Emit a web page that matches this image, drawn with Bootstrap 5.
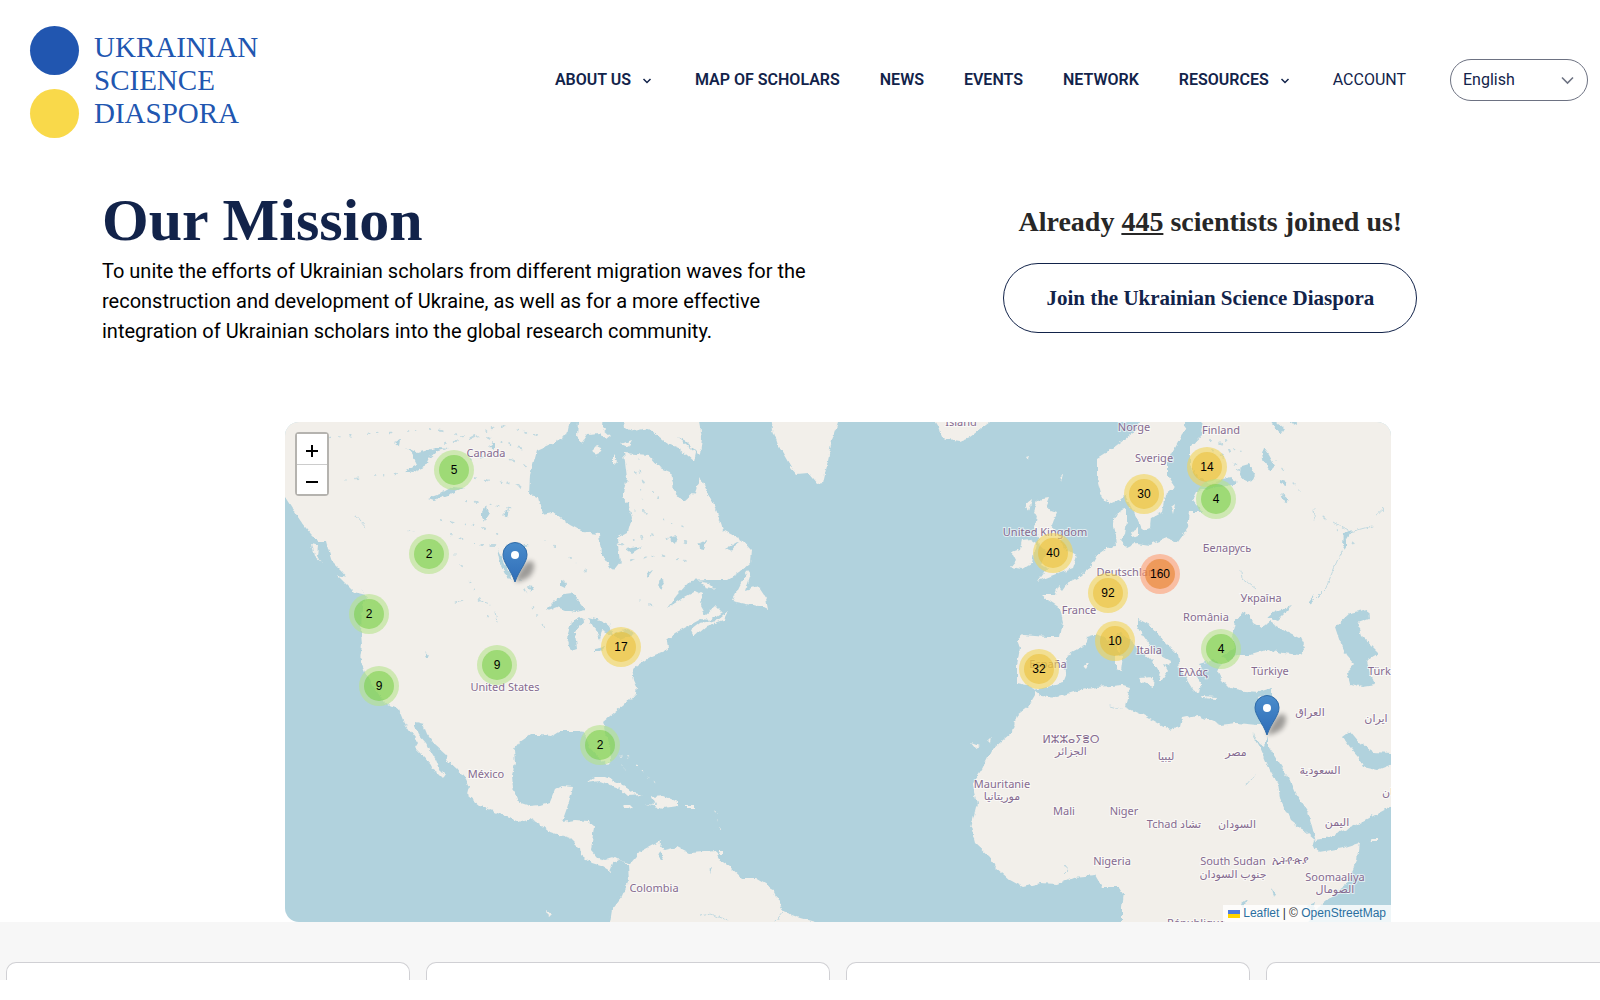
<!DOCTYPE html>
<html lang="en">
<head>
<meta charset="utf-8">
<meta name="viewport" content="width=device-width, initial-scale=1">
<title>Ukrainian Science Diaspora</title>
<link href="https://cdn.jsdelivr.net/npm/bootstrap@5.3.0/dist/css/bootstrap.min.css" rel="stylesheet">
<style>
  :root { --navy: #12234a; --blue: #2156b0; --yellow: #f9d94a; --water: #b1d2dd; --land: #f2efea; }
  body { font-family: Roboto, "Liberation Sans", sans-serif; color: #000; background: #fff; overflow-x: hidden; }
  .site-head { padding: 26px 12px 0 30px; }
  .logo-link { gap: 15px; }
  .logo-dots { display: flex; flex-direction: column; gap: 14px; }
  .logo-dots span { width: 49px; height: 49px; border-radius: 50%; background: var(--blue); }
  .logo-dots span + span { background: var(--yellow); }
  .logo-name { font: 29px/33px "Liberation Serif", serif; color: var(--blue); padding-top: 5px; }
  .site-nav { gap: 40px; padding-top: 33px; }
  .site-nav a { color: var(--navy); text-decoration: none; font-weight: 600; font-size: 16px; line-height: 24px; white-space: nowrap; }
  .site-nav a svg { margin: 0 3px 0 7px; }
  .site-nav a.account { font-weight: 400; }
  .lang { width: 138px; height: 42px; border: 1px solid #6d7282; border-radius: 21px; padding: 0 12px; font-size: 16px; color: var(--navy); background: transparent; appearance: none; }
  .lang-wrap svg { position: absolute; right: 14px; top: 17px; pointer-events: none; }
  .hero { padding: 48px 98px 0 102px; }
  .hero h1 { font: bold 60px/68px "Liberation Serif", serif; color: var(--navy); margin: 0 0 2px; }
  .hero p { font-size: 20px; line-height: 30px; max-width: 720px; margin: 0; }
  .joined { font: bold 28px/36px "Liberation Serif", serif; color: #272727; margin: 18px 0 23px; }
  .join-btn { font: bold 21px/28px "Liberation Serif", serif; color: var(--navy); border: 1px solid var(--navy); border-radius: 35px; padding: 20px 42px; }
  .map-wrap { margin: 76px 209px 0 285px; }
  .scholar-map { height: 500px; border-radius: 14px 14px 0 14px; overflow: hidden; background: var(--water); }
  .scholar-map > svg { width: 100%; height: 100%; display: block; }
  .place { font: 11px "Noto Sans", "DejaVu Sans", sans-serif; fill: #866b90; text-anchor: middle; paint-order: stroke; stroke: #fff; stroke-opacity: .6; stroke-width: 2px; }
  .place .cut { text-anchor: start; }
  .count { font: 12px "Liberation Sans", sans-serif; text-anchor: middle; fill: #000; }
  .zoomer { position: absolute; left: 10px; top: 10px; border: 2px solid rgba(0,0,0,.25); border-radius: 4px; background-clip: padding-box; }
  .zoomer button { width: 30px; height: 30px; border: 0; background: #fff; display: flex; align-items: center; justify-content: center; padding: 4px 0 0; color: #000; }
  .zoomer button + button { border-top: 1px solid #ccc; }
  .credit { position: absolute; right: 0; bottom: 0; background: rgba(255,255,255,.8); font: 12px/17px "Liberation Sans", sans-serif; padding: 0 5px; color: #333; }
  .credit a { color: #2a6fa0; text-decoration: none; }
  .news-strip { background: #f7f7f7; padding: 40px 0 0 6px; overflow: hidden; }
  .news-strip .d-flex { gap: 16px; }
  .news-card { flex: 0 0 404px; height: 18px; background: #fff; border: 1px solid #d0d0d4; border-bottom: 0; border-radius: 10px 10px 0 0; }
</style>
<script src="https://cdn.jsdelivr.net/npm/bootstrap@5.3.0/dist/js/bootstrap.bundle.min.js"></script>
</head>
<body>
<header class="site-head d-flex justify-content-between align-items-start">
  <a href="#" class="logo-link d-flex text-decoration-none">
    <div class="logo-dots"><span></span><span></span></div>
    <div class="logo-name">UKRAINIAN<br>SCIENCE<br>DIASPORA</div>
  </a>
  <nav class="site-nav d-flex align-items-center">
    <a href="#">ABOUT US <svg width="10" height="8" viewBox="0 0 10 8" fill="none" stroke="#12234a" stroke-width="1.5"><path d="M1.500 2 5 5.500 8.500 2"/></svg></a>
    <a href="#">MAP OF SCHOLARS</a>
    <a href="#">NEWS</a>
    <a href="#">EVENTS</a>
    <a href="#">NETWORK</a>
    <a href="#">RESOURCES <svg width="10" height="8" viewBox="0 0 10 8" fill="none" stroke="#12234a" stroke-width="1.5"><path d="M1.500 2 5 5.500 8.500 2"/></svg></a>
    <a href="#" class="account">ACCOUNT</a>
    <div class="lang-wrap position-relative ms-1">
      <select class="lang" aria-label="Language"><option>English</option><option>Українська</option></select>
      <svg width="13" height="9" viewBox="0 0 13 9" fill="none" stroke="#6d7282" stroke-width="1.600"><path d="M1 1.500 6.500 7 12 1.500"/></svg>
    </div>
  </nav>
</header>

<main>
  <section class="hero">
    <div class="row g-0">
      <div class="col-7">
        <h1>Our Mission</h1>
        <p>To unite the efforts of Ukrainian scholars from different migration waves for the reconstruction and development of Ukraine, as well as for a more effective integration of Ukrainian scholars into the global research community.</p>
      </div>
      <div class="col-5 text-center">
        <h2 class="joined">Already <u>445</u> scientists joined us!</h2>
        <button type="button" class="btn join-btn">Join the Ukrainian Science Diaspora</button>
      </div>
    </div>
  </section>

  <div class="map-wrap">
    <div class="scholar-map position-relative">
      <svg viewBox="285 422 1106 500" preserveAspectRatio="xMidYMid slice" role="img" aria-label="Map of scholars">
        <defs>
          <filter id="coast" filterUnits="userSpaceOnUse" x="275" y="412" width="1126" height="520">
            <feTurbulence type="fractalNoise" baseFrequency=".16" numOctaves="3" seed="4" result="n"/>
            <feDisplacementMap in="SourceGraphic" in2="n" scale="5" xChannelSelector="R" yChannelSelector="G"/>
          </filter>
          <filter id="soft" x="-50%" y="-50%" width="200%" height="200%"><feGaussianBlur stdDeviation="2.500"/></filter>
          <linearGradient id="pinfill" x1="0" y1="0" x2="0" y2="1"><stop offset="0" stop-color="#4a8ccb"/><stop offset="1" stop-color="#2f6db8"/></linearGradient>
          <g id="pin">
            <path d="M0 0C3-10 8-18 14-21 21-22 20-12 15-6Q9-1 0 0Z" fill="#000" opacity=".35" filter="url(#soft)"/>
            <path d="M0 0C-2-6-5-11-8-16-10-20-12-23-12-27.500A12 12 0 0 1 12-27.500C12-23 10-20 8-16 5-11 2-6 0 0Z" fill="url(#pinfill)" stroke="#2e6ba8" stroke-width="1"/>
            <circle cy="-27" r="4" fill="#fff"/>
          </g>
          <g id="green"><circle r="20" fill="#b5e28c" fill-opacity=".6"/><circle r="15" fill="#6ecc39" fill-opacity=".5"/></g>
          <g id="yellow"><circle r="20" fill="#f1d357" fill-opacity=".6"/><circle r="15" fill="#e9bc2b" fill-opacity=".5"/></g>
          <g id="orange"><circle r="20" fill="#fd9c73" fill-opacity=".6"/><circle r="15" fill="#e57b20" fill-opacity=".55"/></g>
        </defs>

        <g filter="url(#coast)">
        <g fill="#f2efea">
          <!-- Americas -->
          <path d="M275 410V490L285 497 292 508 302 523 310 533 318 541 326 541 328 549 332 562 342 572 352 584 363 592 368 598 362 606 361 633 362 645 360 660 366 675 385 704 399 710 403 720 409 730 415 738 418 743 415 748 424 757 430 764 431 768 437 772 443 778 445 775 440 770 436 760 430 750 426 743 419 735 415 726 415 722 423 724 427 734 435 745 446 755 448 761 457 769 466 780 469 787 467 795 480 806 500 814 519 822 530 818 540 824 548 831 560 835 570 838 580 848 581 855 592 863 602 866 610 871 613 863 620 858 628 866 629 880 622 897 612 910 608 935H830L815 922 800 918 784 912 778 900 772 888 755 878 742 878 730 867 720 860 715 851 704 852 690 853 678 847 665 850 660 848 661 841 655 844 640 852 630 864 625 862 615 857 605 860 598 858 591 850 592 842 594 826 588 821 575 820 562 822 567 808 571 795 573 787 562 786 555 790 550 802 540 805 530 806 518 802 513 788 512 775 515 764 514 750 520 742 530 735 540 735 552 736 560 731 580 731 586 738 590 748 598 757 607 764 611 760 610 745 605 732 603 722 615 712 630 700 636 693 637 687 634 680 632 670 638 665 645 660 652 656 668 650 667 640 675 633 690 625 701 619 710 620 722 612 716 606 706 615 701 606 702 594 696 591 683 598 667 608 677 595 690 581 707 580 727 580 740 572 750 563 751 550 742 540 723 530 717 512 709 495 700 477 695 492 684 502 673 490 670 472 660 468 648 455 624 453 627 478 622 497 628 502 632 518 628 532 617 538 620 562 613 571 601 553 599 534 583 532 570 525 553 512 542 514 538 497 529 495 530 475 537 450 553 443 567 435 572 410Z"/>
          <path d="M578 422 577 436 582 443 588 434 600 433 606 440 611 436 602 428 603 410H578ZM622 410 624 428 634 431 648 428 658 436 668 444 680 449 694 461 696 452 686 444 676 436 686 441 700 455 702 438 697 410ZM591 452 597 446 602 448 597 455ZM613 455 617 461 613 465ZM621 444 632 440 628 447Z"/>
          <path d="M770 410 773 430 778 445 784 455 791 467 797 474 808 473 817 484 823 483 828 460 832 440 838 422V410Z"/>
          <path d="M748 570 740 585 732 601 751 605 760 606 768 610 766 598 758 586 746 590 751 574ZM691 630 700 623 718 620 728 612 724 620 706 626 694 636ZM700 582 709 583 716 590 706 588Z"/>
          <path d="M586 783 594 777 605 777 621 784 634 793 644 795 628 796 619 788 600 781ZM644 804 656 805 652 797 664 796 678 802 678 806 664 808ZM622 805 630 805 633 808 626 809ZM686 805 694 805 694 808 686 808ZM622 765 626 772 623 766ZM719 851 723 851V855H718Z"/>
          <path d="M311 544 318 546 317 556 322 563 314 556ZM337 575 348 577 359 588 366 595 354 592ZM290 500 299 508 301 521 294 510Z"/>
          <!-- Iceland, British Isles -->
          <path d="M930 412 940 429 942 438 960 441 970 437 990 422V410Z"/>
          <path d="M1037 500 1049 498 1045 508 1057 512 1052 525 1059 536 1064 548 1077 556 1073 568 1056 574 1038 581 1048 568 1040 565 1044 558 1048 552 1040 545 1035 528 1037 515 1033 512ZM1030 539 1022 540 1020 549 1012 552 1016 560 1010 567 1022 569 1032 563 1034 552 1036 543ZM1026 504 1032 499 1029 512Z"/>
          <!-- Scandinavia -->
          <path d="M1147 410 1133 433 1113 448 1097 458 1097 478 1102 498 1110 504 1120 500 1125 495 1130 505 1137 518 1142 530 1150 527 1151 518 1162 512 1165 495 1175 487 1167 475 1167 462 1175 448 1182 435 1190 410Z"/>
          <!-- Eurasia and Africa -->
          <path d="M1205 410 1202 435 1190 448 1190 465 1197 477 1210 483 1230 478 1238 482 1232 485 1217 487 1197 492 1193 500 1203 512 1190 512 1188 528 1178 542 1167 538 1150 545 1137 543 1127 548 1120 540 1125 534 1127 522 1127 508 1117 514 1113 522 1116 535 1117 547 1107 548 1097 555 1090 568 1077 578 1067 583 1062 590 1058 586 1055 595 1042 595 1048 600 1060 608 1063 622 1060 637 1047 637 1023 635 1017 640 1020 648 1017 665 1017 683 1027 685 1035 689 1035 695 1028 707 1017 715 1012 732 992 750 982 770 972 785 977 803 971 827 975 843 990 857 995 867 1010 880 1023 887 1040 883 1057 884 1073 877 1095 875 1102 887 1120 887 1124 893 1122 907 1122 935H1300L1320 905 1347 883 1357 860 1359 843 1343 848 1320 852 1313 846 1315 840 1327 838 1360 823 1390 807 1401 800V410Z"/>
        </g>
        <g fill="#b1d2dd">
          <!-- Mediterranean -->
          <path d="M1034 690 1047 687 1063 683 1067 673 1063 664 1070 653 1085 645 1087 637 1097 634 1110 640 1120 633 1130 640 1137 648 1150 660 1156 666 1160 673 1158 680 1162 680 1168 671 1164 664 1169 666 1171 661 1160 655 1150 645 1142 634 1138 626 1138 619 1150 625 1163 640 1178 655 1180 668 1187 680 1193 690 1199 693 1201 684 1196 676 1203 670 1199 664 1212 660 1222 665 1217 670 1222 680 1230 688 1245 691 1260 692 1272 688 1272 700 1268 715 1264 725 1257 725 1237 723 1220 725 1197 715 1182 718 1180 727 1170 730 1157 723 1143 715 1125 707 1130 687 1123 685 1097 687 1073 692 1057 697 1040 695Z"/>
          <!-- Black Sea, Azov, Caspian -->
          <path d="M1242 612 1250 615 1253 623 1262 628 1270 622 1278 627 1300 638 1305 648 1300 655 1283 653 1267 650 1250 655 1237 655 1228 660 1222 656 1234 648 1232 635 1235 622ZM1267 617 1273 612 1292 606 1283 615 1277 621Z"/>
          <path d="M1335 627 1350 613 1368 609 1369 619 1358 623 1363 638 1372 646 1379 653 1367 660 1370 675 1376 685 1363 687 1350 684 1347 672 1354 664 1346 655 1340 642Z"/>
          <!-- Red Sea, Persian Gulf -->
          <path d="M1252 733 1260 743 1265 746 1268 736 1268 746 1277 760 1288 777 1295 793 1308 812 1316 841 1307 833 1290 820 1280 798 1278 784 1270 770 1260 747ZM1342 737 1350 731 1360 743 1373 752 1391 753 1402 748V764L1390 765 1377 770 1363 767 1358 757 1350 748Z"/>
          <!-- White Sea, Russian and Finnish lakes -->
          <path d="M1266 410 1272 424 1280 434 1284 428 1277 422V410ZM1285 410 1290 422 1297 426 1296 410ZM1241 465 1248 463 1255 473 1253 480 1246 482 1240 475ZM1264 448 1269 455 1275 466 1270 471 1264 462 1262 454ZM1280 480 1286 482V486L1280 484ZM1281 493 1289 500 1285 503ZM1344 533 1352 530 1346 540V550L1343 545ZM1308 602 1314 595 1311 604ZM1307 906 1316 902 1314 912ZM1241 904 1247 900 1243 909ZM1272 888 1276 894 1274 898Z"/>
          <!-- Great Lakes and Canadian lakes -->
          <path d="M545 611 556 600 564 594 572 593 578 600 586 610 576 612 565 610 557 607ZM578 617 571 622 567 638 571 651 577 649 575 632 585 620ZM588 617 600 620 610 625 613 636 602 630 600 640 594 628ZM594 648 606 646 600 652 594 652ZM614 634 628 629 634 634 620 640ZM561 580 566 582 565 588 561 586Z"/>
          <path d="M404 471 417 464 411 452 405 447 418 453 428 450 438 447 449 448 436 452 428 459 424 467 412 472ZM428 498 440 494 452 487 464 488 448 495 434 500ZM497 548 501 556 506 566 512 580 507 577 500 563ZM486 505 489 513 484 521 481 515ZM394 442 400 440 399 446ZM489 446 494 442 494 450ZM503 514 509 508 507 517ZM527 586 534 587 531 592ZM660 578 665 582 661 590 658 586ZM698 544 706 540 704 549 699 548ZM668 538 677 536 675 544ZM626 549 643 546 632 553ZM725 549 739 541 731 551ZM646 573 653 570 647 578ZM425 650 430 656 427 658ZM708 869 712 867 710 873ZM660 851 664 857 662 861 658 857Z"/>
        </g>
        <!-- Mediterranean, Baltic and small ocean islands -->
        <path fill="#f2efea" d="M1139 678 1154 677 1153 687 1142 682ZM1116 655 1123 656 1121 671 1116 669ZM1117 643 1121 641 1120 652 1117 650ZM1201 696 1217 697 1216 699 1202 698ZM1257 697 1267 694 1262 700ZM1083 666 1089 663 1086 669ZM1171 507 1175 504 1173 514ZM1131 532 1138 528 1138 536 1133 538ZM1027 456 1030 455 1029 459ZM1059 478 1063 474 1061 482ZM971 743 979 746 975 748ZM988 741 991 738 990 743ZM547 911 551 914 548 917ZM1370 839 1377 839V841H1371ZM588 554 593 553 595 558 588 557Z"/>
        <path fill="none" stroke="#f2efea" stroke-linecap="round" stroke-dasharray="1 7" d="M620 755 629 757M636 766 658 785M716 812 722 835"/>
        <!-- Scattered lakes and rivers -->
        <g fill="none" stroke="#b1d2dd" stroke-linecap="round" opacity=".75">
          <path stroke-width="2" stroke-dasharray="1 9 3 13 0 7" d="M430 428 470 438 500 425 540 436M445 443 480 436 524 448M470 460 500 453 528 468M475 478 522 486M465 500 520 510M440 520 470 524 500 534M450 535 480 545 540 545M1210 440 1250 455M1212 450 1245 470M1225 440 1240 475M610 548 650 535 700 545M620 562 660 555 690 562M635 473 660 500"/>
          <path stroke-width="1.500" stroke-dasharray="0 11 2 17 1 8" d="M300 440 420 430M345 480 420 470M455 555 490 620M545 540 600 580M635 510 690 530M640 600 660 610M1275 460 1300 490M1315 510 1360 550M520 580 550 640M638 460 645 520"/>
          <path stroke-width="1" d="M356 516 366 528M408 531 415 532M455 603 463 601M478 600 490 604M495 612 497 622M1241 572 1242 578 1256 589M1313 511 1315 519M1333 522 1350 532 1372 526M1376 516 1384 509M1342 550 1334 568 1326 588 1312 602M1247 785 1255 775M1110 706 1120 709M1064 865 1069 871 1065 875M700 916 710 914 729 921M783 912 775 922"/>
        </g>
        </g>

        <g class="place">
          <text x="486" y="457">Canada</text><text x="505" y="691">United States</text><text x="486" y="778">México</text><text x="654" y="892">Colombia</text>
          <text x="961" y="426">Island</text><text x="1134" y="431">Norge</text><text x="1154" y="462">Sverige</text><text x="1221" y="434">Finland</text>
          <text x="1045" y="536">United Kingdom</text><text x="1129" y="576">Deutschland</text><text x="1079" y="614">France</text><text x="1048" y="668">España</text><text x="1149" y="654">Italia</text>
          <text x="1227" y="552">Беларусь</text><text x="1261" y="602">Україна</text><text x="1206" y="621">România</text><text x="1270" y="675">Türkiye</text><text x="1193" y="676">Ελλάς</text>
          <text x="1368" y="675" class="cut">Türkmenistan</text>
          <text x="1310" y="716">العراق</text><text x="1376" y="722">ایران</text><text x="1071" y="743">ⵍⵣⵣⴰⵢⴻⵔ</text><text x="1071" y="755">الجزائر</text><text x="1166" y="760">ليبيا</text><text x="1236" y="756">مصر</text>
          <text x="1320" y="774">السعودية</text><text x="1382" y="796" class="cut">عمان</text><text x="1337" y="826">اليمن</text>
          <text x="1002" y="788">Mauritanie</text><text x="1002" y="800">موريتانيا</text><text x="1064" y="815">Mali</text><text x="1124" y="815">Niger</text><text x="1174" y="828">Tchad تشاد</text><text x="1237" y="828">السودان</text>
          <text x="1112" y="865">Nigeria</text><text x="1233" y="865">South Sudan</text><text x="1233" y="878">جنوب السودان</text><text x="1290" y="864">ኢትዮጵያ</text><text x="1335" y="881">Soomaaliya</text><text x="1335" y="893">الصومال</text>
          <text x="1167" y="927" class="cut">République</text>
        </g>

        <use href="#pin" x="515" y="582"/><use href="#pin" x="1267" y="735"/>
        <g class="count">
          <g transform="translate(454 470)"><use href="#green"/><text y="4">5</text></g>
          <g transform="translate(429 554)"><use href="#green"/><text y="4">2</text></g>
          <g transform="translate(369 614)"><use href="#green"/><text y="4">2</text></g>
          <g transform="translate(497 665)"><use href="#green"/><text y="4">9</text></g>
          <g transform="translate(379 686)"><use href="#green"/><text y="4">9</text></g>
          <g transform="translate(600 745)"><use href="#green"/><text y="4">2</text></g>
          <g transform="translate(621 647)"><use href="#yellow"/><text y="4">17</text></g>
          <g transform="translate(1053 553)"><use href="#yellow"/><text y="4">40</text></g>
          <g transform="translate(1144 494)"><use href="#yellow"/><text y="4">30</text></g>
          <g transform="translate(1108 593)"><use href="#yellow"/><text y="4">92</text></g>
          <g transform="translate(1115 641)"><use href="#yellow"/><text y="4">10</text></g>
          <g transform="translate(1039 669)"><use href="#yellow"/><text y="4">32</text></g>
          <g transform="translate(1160 574)"><use href="#orange"/><text y="4">160</text></g>
          <g transform="translate(1207 467)"><use href="#yellow"/><text y="4">14</text></g>
          <g transform="translate(1216 499)"><use href="#green"/><text y="4">4</text></g>
          <g transform="translate(1221 649)"><use href="#green"/><text y="4">4</text></g>
        </g>
      </svg>
      <div class="zoomer">
        <button type="button" aria-label="Zoom in"><svg width="12" height="12" viewBox="0 0 12 12" stroke="#000" stroke-width="2"><path d="M0 6H12M6 0V12"/></svg></button>
        <button type="button" aria-label="Zoom out"><svg width="12" height="12" viewBox="0 0 12 12" stroke="#000" stroke-width="2"><path d="M0 6H12"/></svg></button>
      </div>
      <div class="credit"><a href="#"><svg width="12" height="8" viewBox="0 0 12 8"><path fill="#4c7be1" d="M0 0h12v4H0z"/><path fill="#ffd500" d="M0 4h12v4H0z"/></svg> Leaflet</a> | © <a href="#">OpenStreetMap</a></div>
    </div>
  </div>

  <section class="news-strip">
    <div class="d-flex"><div class="news-card"></div><div class="news-card"></div><div class="news-card"></div><div class="news-card"></div></div>
  </section>
</main>
</body>
</html>
